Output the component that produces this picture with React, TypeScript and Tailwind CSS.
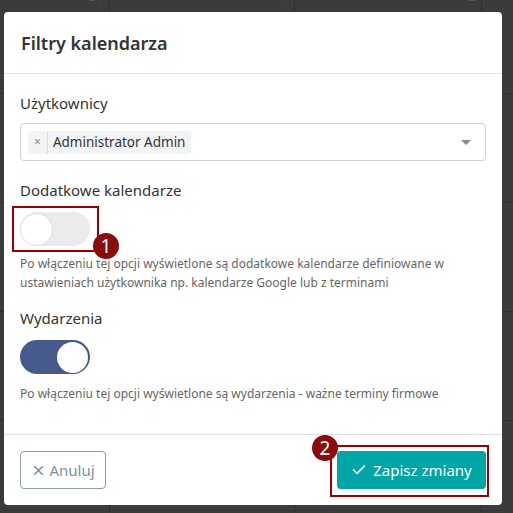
import { Check, X } from "lucide-react"

const days = ["31", "1", "2", "3"]

function CalendarBackdrop() {
  // dimmed calendar behind the modal
  return (
    <div className="absolute inset-0 overflow-hidden bg-[#3b3b3b]">
      <div className="-ml-[76px] -mt-[15px] grid grid-cols-[186px_185px_187px_186px] auto-rows-[109px]">
        {Array.from({ length: 24 }).map((_, i) => (
          <div key={i} className="border-r border-b border-[#2f2f2f] pr-[5px] text-right text-[14px] leading-[16px] text-[#555] pt-[3px]">
            {i < 4 ? days[i] : ""}
          </div>
        ))}
      </div>
    </div>
  )
}

function Toggle({ on }: { on: boolean }) {
  return (
    <div
      className={
        on
          ? "flex h-[34px] w-[70px] items-center justify-end rounded-full bg-[#465a8c] px-[2px]"
          : "flex h-[34px] w-[70px] items-center justify-start rounded-full bg-[#ebebeb] px-[1px]"
      }
    >
      <div className="h-[31px] w-[31px] rounded-full bg-white shadow-[0_0_2px_rgba(0,0,0,0.15)]" />
    </div>
  )
}

function Badge({ n }: { n: string }) {
  return (
    <div className="flex h-[26px] w-[26px] items-center justify-center rounded-full bg-[#8b0c0c] text-[19px] leading-none text-white">
      {n}
    </div>
  )
}

export default function App() {
  return (
    <div className="relative h-[513px] w-[513px] overflow-hidden font-['Noto_Sans',sans-serif]">
      <CalendarBackdrop />

      {/* MODAL */}
      <div className="absolute left-[4px] top-[12px] flex h-[493px] w-[498px] flex-col rounded-[4px] bg-white">
        {/* HEADER */}
        <div className="flex h-[62px] items-center border-b border-[#e5e5e5] px-[17px]">
          <h4 className="pt-[2px] text-[18px] font-semibold text-[#333]">Filtry kalendarza</h4>
        </div>

        {/* BODY */}
        <div className="flex-1 px-[16px] pt-[18px]">
          <label className="block text-[15px] leading-[22px] text-[#333]">Użytkownicy</label>
          <div className="mt-[9px] flex h-[38px] items-center rounded-[4px] border border-[#d0d0d0] pl-[7px] pr-[14px]">
            <div className="flex h-[23px] items-center rounded-[2px] bg-[#f2f3f5] text-[13.5px] text-[#333]">
              <span className="px-[6px] text-[12px] text-[#888]">×</span>
              <span className="h-full border-l border-[#dcdcdc]" />
              <span className="pl-[5px] pr-[6px]">Administrator Admin</span>
            </div>
            <div className="ml-auto h-0 w-0 border-x-[5px] border-t-[5px] border-x-transparent border-t-[#888]" />
          </div>

          <label className="mt-[18px] block text-[15px] leading-[22px] text-[#333]">Dodatkowe kalendarze</label>
          <div className="relative mt-[11px] w-fit">
            <Toggle on={false} />
            <div className="absolute -left-[8px] -top-[6px] h-[46px] w-[87px] border-2 border-[#990000]" />
            <div className="absolute left-[73px] top-[21px]">
              <Badge n="1" />
            </div>
          </div>
          <p className="mt-[8px] text-[12px] leading-[19px] text-[#666]">
            Po włączeniu tej opcji wyświetlone są dodatkowe kalendarze definiowane w ustawieniach użytkownika np. kalendarze Google lub z terminami
          </p>

          <label className="mt-[15px] block text-[15px] leading-[22px] text-[#333]">Wydarzenia</label>
          <div className="mt-[11px]">
            <Toggle on />
          </div>
          <p className="mt-[10px] text-[12px] leading-[19px] text-[#666]">
            Po włączeniu tej opcji wyświetlone są wydarzenia - ważne terminy firmowe
          </p>
        </div>

        {/* FOOTER */}
        <div className="flex h-[71px] items-center justify-between border-t border-[#e0e0e8] px-[16px]">
          <button className="flex h-[38px] w-[86px] items-center justify-center gap-[3px] rounded-[4px] border border-[#8a9db2] text-[15px] text-[#7c90a7]">
            <X size={15} strokeWidth={2.5} />
            Anuluj
          </button>
          <div className="relative">
            <button className="flex h-[38px] w-[149px] items-center justify-center gap-[6px] rounded-[4px] bg-[#00a5a5] text-[15px] text-white">
              <Check size={16} strokeWidth={2.5} />
              Zapisz zmiany
            </button>
            <div className="absolute -left-[7px] -top-[6px] h-[52px] w-[159px] border-2 border-[#990000]" />
            <div className="absolute -left-[25px] -top-[16px]">
              <Badge n="2" />
            </div>
          </div>
        </div>
      </div>
    </div>
  )
}
